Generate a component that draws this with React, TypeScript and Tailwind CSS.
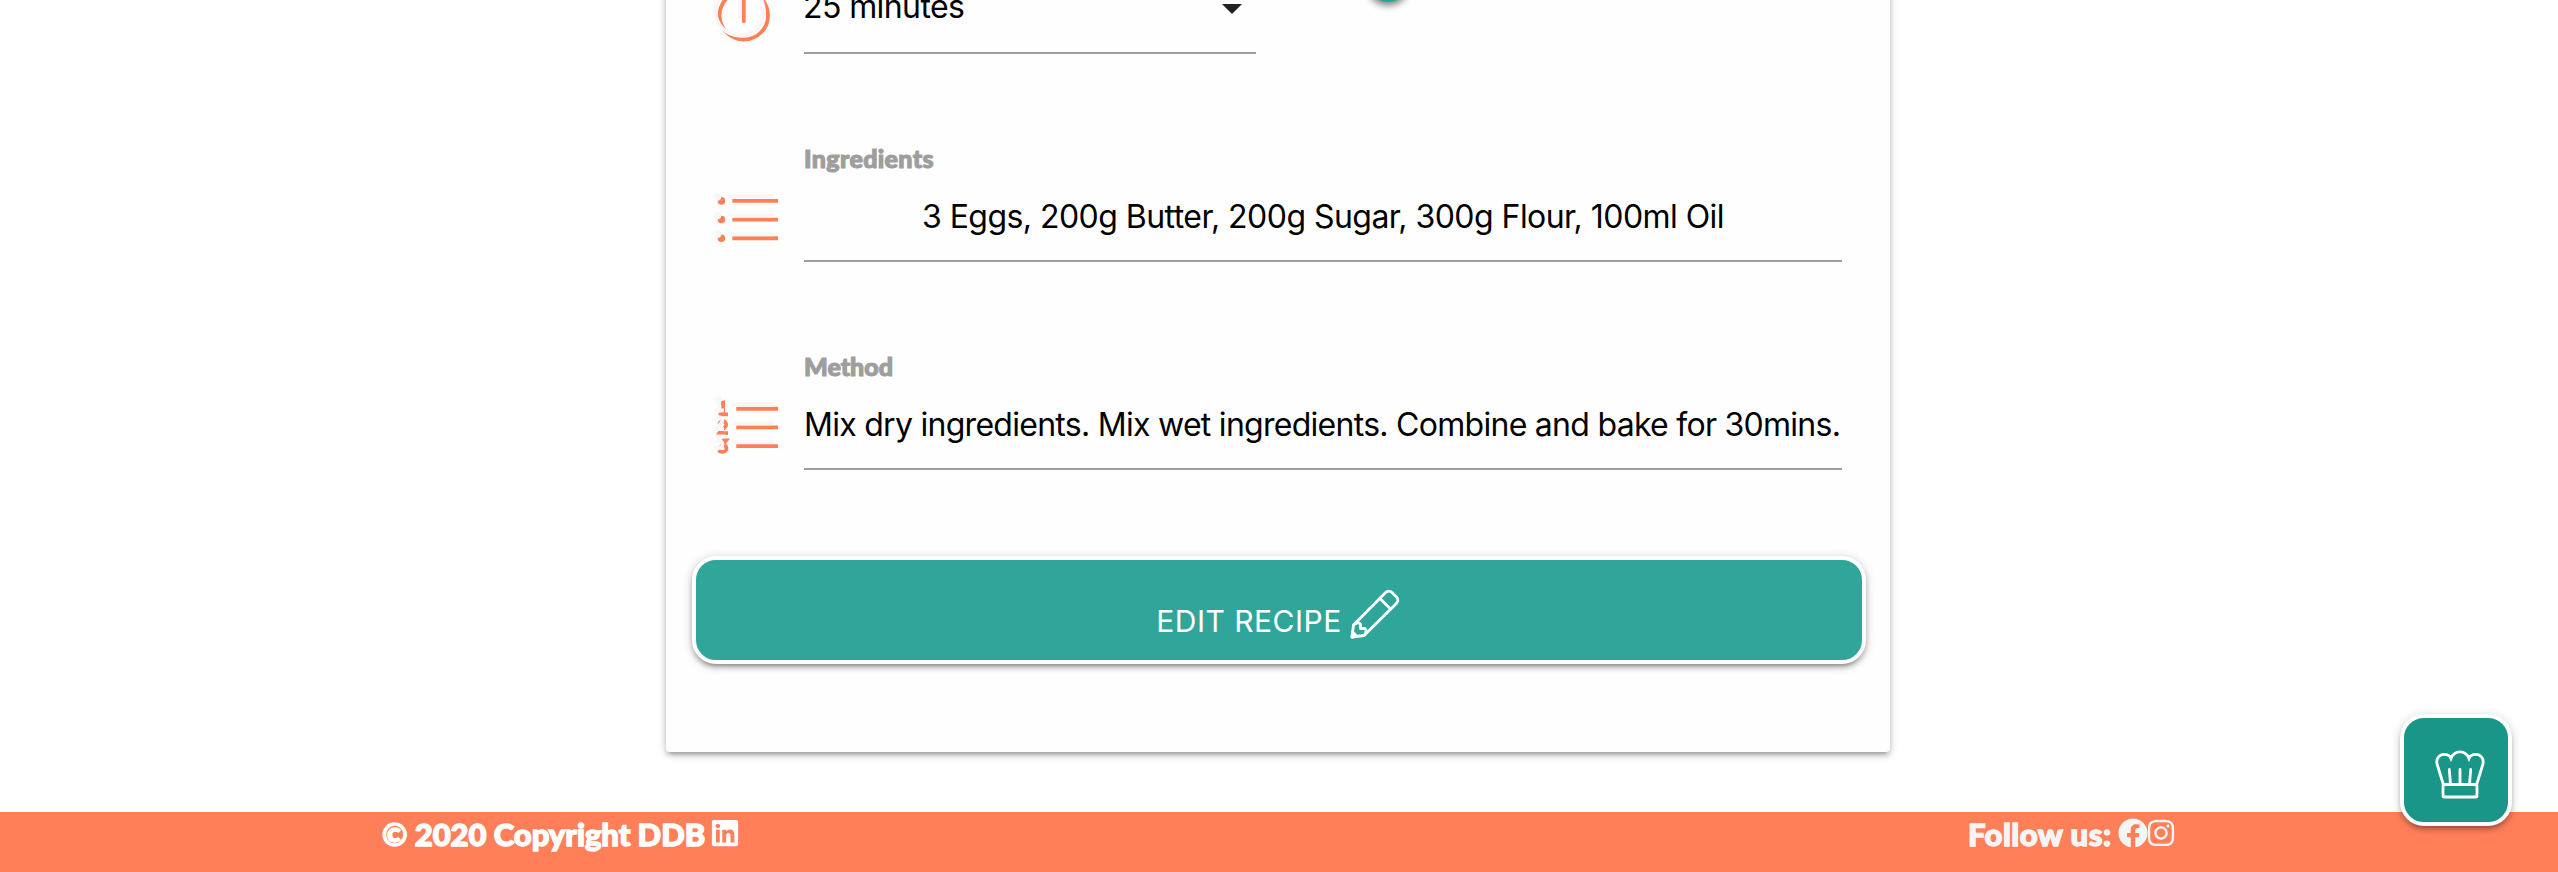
import React from "react";
import { FaFacebook, FaInstagram, FaLinkedin } from "react-icons/fa";

const rounded = "font-['Lato',sans-serif] font-black";

function WithHighlight({ children }: { children: React.ReactNode }) {
  return (
    <>
      <g stroke="#ff7f57" fill="none">{children}</g>
      <g stroke="#f8f7f7" fill="none" transform="translate(-4 -4)">{children}</g>
    </>
  );
}

function ClockIcon() {
  return (
    <svg width="72" height="48" viewBox="708 0 72 48">
      <WithHighlight>
        <circle cx="743.8" cy="15.4" r="24.2" strokeWidth="3.8" />
        <path d="M743.8 -4V21.2" strokeWidth="3.8" strokeLinecap="round" />
      </WithHighlight>
    </svg>
  );
}

function BulletListIcon() {
  return (
    <svg width="72" height="64" viewBox="708 188 72 64">
      <WithHighlight>
        <path d="M732.3 200.9H778M732.3 219.6H778M732.3 238.3H778" strokeWidth="3.9" />
        <path d="M721.4 200.9h.01M721.4 219.6h.01M721.4 238.3h.01" strokeWidth="7.6" strokeLinecap="round" />
      </WithHighlight>
    </svg>
  );
}

function NumberListIcon() {
  return (
    <svg width="72" height="64" viewBox="708 396 72 64">
      <WithHighlight>
        <path d="M736.3 408.7H778M736.3 427.4H778M736.3 446.1H778" strokeWidth="3.9" />
        <path
          d="M719.5 403.8L723.2 402.5V414.3M718.6 414.3H728M719.3 424.2C720 419.5 726.8 420.6 726.2 425C725.8 428 720.5 430.5 719 433.2H728M719.6 440.3H726.2L722.6 444.8C728 444.6 727.6 452 722.6 452C720.8 452 719.4 451.4 718.6 450.2"
          strokeWidth="3.7"
        />
      </WithHighlight>
    </svg>
  );
}

function PencilIcon() {
  return (
    <svg width="50" height="50" viewBox="0 0 50 50" fill="none" stroke="#fff" strokeWidth="2.8" strokeLinejoin="round">
      <path d="M3.5 36L35.6 3.600C37.500 1.700 40.200 1.700 42 3.600L46.400 8C48.300 9.900 48.300 12.500 46.400 14.400L14 46.500L2 48Z" />
      <path d="M30 9.400L40.600 20M3.500 36C5.500 33.500 8.800 33.500 10.500 35V39.500H15C16.500 41 16.500 44.500 14 46.500" />
      <path d="M2.600 43.500C4.200 44 5.800 45.600 6.500 47.400L2 48Z" fill="#fff" />
    </svg>
  );
}

function ChefHatIcon() {
  return (
    <svg width="50" height="50" viewBox="0 0 50 50" fill="none" stroke="#fff" strokeWidth="2.8" strokeLinejoin="miter" strokeLinecap="round">
      <path d="M8.200 34L2.200 14.500C.5 8.500 4.800 4.400 9 4.400C12.500 4.400 15 6 16 8.500C17.500 4.500 20.800 1.900 25 1.900C29.200 1.900 32.500 4.500 34 8.500C35 6 37.500 4.400 41 4.400C45.200 4.400 49.500 8.500 47.800 14.500L41.800 34" />
      <rect x="8" y="34.500" width="34" height="12.500" rx="1" />
      <path d="M14.300 19.500L15.500 34M25 19.500V34M35.700 19.500L34.500 34" />
    </svg>
  );
}

function Field({ label, value, icon, labelTracking, tracking }: { label: string; value: string; icon: React.ReactNode; labelTracking: string; tracking: string }) {
  return (
    <div className="flex h-[208px] pl-[42px]">
      <div className="w-24 shrink-0 pt-[134px]">{icon}</div>
      <div className="flex w-[1038px] flex-col border-b-2 border-[#9e9e9e]">
        <div className={`mt-[88px] h-8 text-[25px] leading-8 text-[#9e9e9e] [-webkit-text-stroke:1.1px_#9e9e9e] ${labelTracking} ${rounded}`}>{label}</div>
        <div className={`mt-[20px] whitespace-nowrap text-center font-['Inter',sans-serif] text-[32px] leading-[46px] text-black ${tracking}`}>{value}</div>
      </div>
    </div>
  );
}

export default function App() {
  return (
    <div className="relative flex h-[872px] w-[2558px] flex-col overflow-hidden bg-white">
      <main className="h-[812px] shrink-0 pl-[666px]">
        <section className="-mt-5 h-[772px] w-[1224px] rounded-[4px] bg-[#fefefe] pt-5 shadow-[0_4px_4px_0_rgba(0,0,0,0.14),0_6px_2px_-4px_rgba(0,0,0,0.12),0_2px_10px_0_rgba(0,0,0,0.2)]">
          <div className="flex h-[54px] pl-[42px]">
            <div className="w-24 shrink-0">
              <ClockIcon />
            </div>
            <div className="flex w-[452px] justify-between border-b-2 border-[#9e9e9e] pr-[14px]">
              <span className="ml-[-1px] mt-[-16px] font-['Inter',sans-serif] text-[32px] leading-[46px] tracking-[-0.6px] text-black">25 minutes</span>
              <svg className="mt-1" width="20" height="10" viewBox="0 0 20 10">
                <path d="M0 0H20L10 10Z" fill="#212121" />
              </svg>
            </div>
            <div className="ml-[110px] mt-[-42px] h-11 w-11 rounded-full bg-[#26a69a] shadow-[0_4px_6px_rgba(0,0,0,0.45)]" />
          </div>
          <Field label="Ingredients" value="3 Eggs, 200g Butter, 200g Sugar, 300g Flour, 100ml Oil" icon={<BulletListIcon />} labelTracking="tracking-[0.35px]" tracking="tracking-[-0.54px]" />
          <Field label="Method" value="Mix dry ingredients. Mix wet ingredients. Combine and bake for 30mins." icon={<NumberListIcon />} labelTracking="tracking-normal" tracking="tracking-[-0.72px] pr-[3px]" />
          <button className="ml-[26px] mt-[86px] flex h-[108px] w-[1174px] justify-center rounded-[24px] border-4 border-white bg-[#30a69a] font-['Inter',sans-serif] text-[30px] tracking-[0.5px] text-white shadow-[0_4px_4px_0_rgba(0,0,0,0.16),0_6px_2px_-4px_rgba(0,0,0,0.14),0_2px_10px_0_rgba(0,0,0,0.24)]">
            <span className="mt-[43px] leading-9">EDIT RECIPE</span>
            <span className="ml-2 mr-[2px] mt-[29px]">
              <PencilIcon />
            </span>
          </button>
        </section>
      </main>
      <footer className={`flex h-[60px] shrink-0 justify-between bg-[#ff7f59] pl-[382px] pr-[382px] text-[31px] leading-[44px] ${rounded}`}>
        <div className="flex text-white">
          <span className="tracking-[-0.05px] [-webkit-text-stroke:1.4px_#fff]">© 2020 Copyright DDB</span>
          <FaLinkedin className="ml-[5px] mt-[5.5px]" size={30} />
        </div>
        <div className="flex text-[#f5f5f5]">
          <span className="tracking-[0.5px] [-webkit-text-stroke:1.4px_#f5f5f5]">Follow us:</span>
          <FaFacebook className="ml-[6px] mt-[5.5px]" size={30} />
          <FaInstagram className="ml-[-1.5px] mt-[5.5px]" size={30} />
        </div>
      </footer>
      <button className="absolute left-[2400px] top-[714px] flex h-28 w-28 rounded-[24px] border-4 border-white bg-[#199688] pl-[31px] pt-8 shadow-[0_4px_4px_0_rgba(0,0,0,0.14),0_6px_2px_-4px_rgba(0,0,0,0.12),0_2px_10px_0_rgba(0,0,0,0.2)]">
        <ChefHatIcon />
      </button>
    </div>
  );
}
